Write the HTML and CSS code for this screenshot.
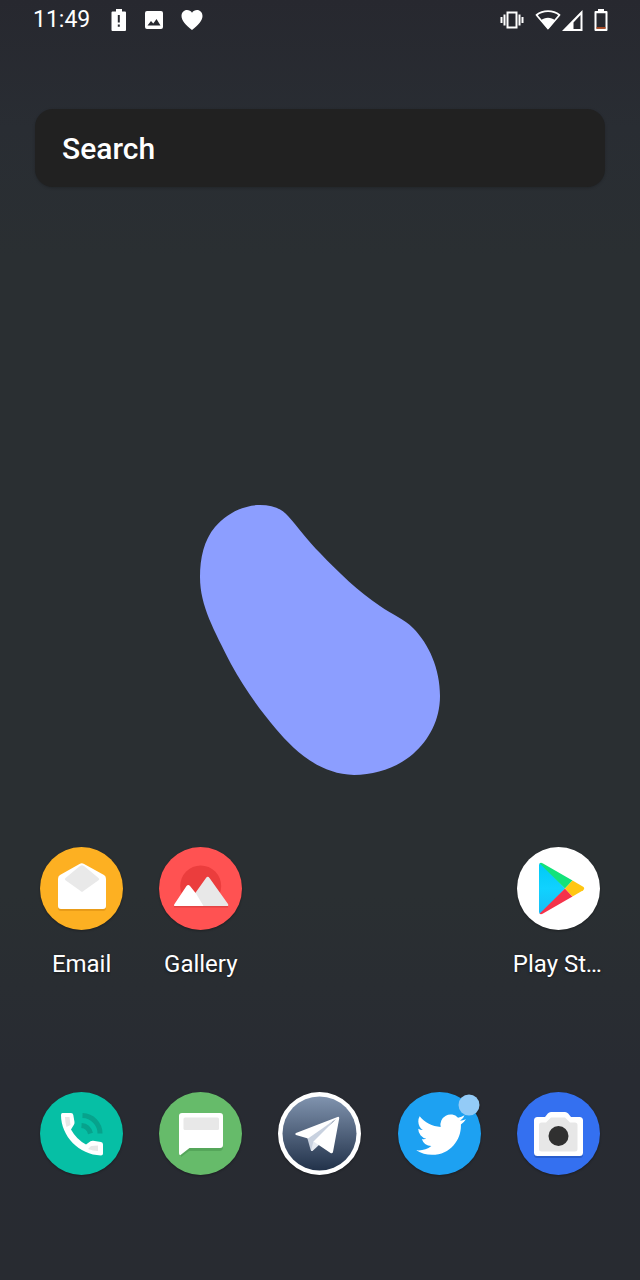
FILE: index.html
```html
<!DOCTYPE html>
<html lang="en">
<head>
<meta charset="utf-8">
<meta name="viewport" content="width=device-width, initial-scale=1">
<title>Home screen</title>
<link rel="stylesheet" href="styles.css">
</head>
<body>
<header class="status">
  <time class="clock">11:49</time>
  <div class="notices">
    <svg width="16" height="22" viewBox="0 0 16 22" aria-label="Battery alert"><path fill="#fff" fill-rule="evenodd" d="M5 0h6v2.500h3a1 1 0 0 1 1 1V21a1 1 0 0 1-1 1H1.500a1 1 0 0 1-1-1V3.500a1 1 0 0 1 1-1H5zM6.800 6v7.500h2V6zm0 9.500v2.300h2v-2.300z"/></svg>
    <svg width="20" height="20" viewBox="0 0 20 20" aria-label="Picture"><path fill="#fff" fill-rule="evenodd" d="M3 1h14a2 2 0 0 1 2 2v14a2 2 0 0 1-2 2H3a2 2 0 0 1-2-2V3a2 2 0 0 1 2-2zM3.500 15.500h13L12.500 9l-3.200 4.500L7 11z"/></svg>
    <svg width="22" height="20" viewBox="0 0 22 20" aria-label="Heart"><path fill="#fff" d="M11 20C5 15 .5 11 .5 6 .5 2.500 3 0 6 0c2 0 4 1 5 2.800C12 1 14 0 16 0c3 0 5.500 2.500 5.500 6 0 5-4.500 9-10.500 14z"/></svg>
  </div>
  <div class="signals">
    <svg class="vibrate" width="24" height="18" viewBox="0 0 24 18" aria-label="Vibrate"><g fill="none" stroke="#fff" stroke-width="2"><rect x="7.500" y="1.500" width="9" height="15"/><path d="M4.500 3.500v11M1.500 6v6M19.500 3.500v11M22.500 6v6"/></g></svg>
    <svg width="26" height="20" viewBox="0 0 26 20" aria-label="Wi-Fi"><path fill="none" stroke="#fff" stroke-width="1.800" stroke-linejoin="round" d="M1.500 5C8-.3 18-.3 24.500 5L13 18.500z"/><path fill="#fff" d="M5.800 10.500c4-3.600 10.400-3.600 14.400 0L13 19z"/></svg>
    <svg width="21" height="21" viewBox="0 0 21 21" aria-label="Mobile signal"><path fill="#fff" fill-rule="evenodd" d="M20.500 0v21H0zM18.500 5v14H11.500v-6.500z"/></svg>
    <svg class="battery" width="14" height="22" viewBox="0 0 14 22" aria-label="Battery low"><path fill="#fff" fill-rule="evenodd" d="M4 0h6v2h2.500q1 0 1 1v18q0 1-1 1h-11q-1 0-1-1V3q0-1 1-1H4zM2.500 4.200v15.500h9V4.200z"/><path fill="#c8501e" d="M2.500 18.200h9v1.500h-9z"/></svg>
  </div>
</header>

<main class="home">
  <input class="search" type="search" placeholder="Search" aria-label="Search">

  <div class="wallpaper">
    <svg width="240" height="270" viewBox="0 0 240 270" aria-hidden="true"><path fill="#8c9eff" d="M60 0C72 0 81 3 88 11C98 22 108 36 120 48C139 68 158 86 180 101C193 110 204 114 213 123C229 139 240 164 240 191C240 215 229 235 213 249C198 262 176 270 154 270C118 269 93 244 76 224C60 205 44 183 31 159C14 125 0 101 0 72C0 53 4 35 15 22C26 9 43 0 60 0Z"/></svg>
  </div>

  <nav class="row" aria-label="Apps">
    <button class="app" type="button">
      <svg class="icon" viewBox="0 0 83 83" aria-hidden="true"><circle cx="41.500" cy="41.500" r="41.500" fill="#fdb022"/><path fill="#e99c18" d="M18 33h48v28q0 3-3 3H21q-3 0-3-3z"/><path fill="#fff" d="M39.500 17q2.300-1.300 4.600 0L64 28q2 1.200 2 4v27q0 3-3 3H21q-3 0-3-3V32q0-2.800 2-4z"/><path fill="#e9e9e9" d="M25.500 31L40 19q2-1.500 4 0l14.500 12q1.500 1.200 0 2.200L42 45 25.500 33.300q-1.500-1.100 0-2.300z"/></svg>
      <span class="label">Email</span>
    </button>
    <button class="app" type="button">
      <svg class="icon" viewBox="0 0 83 83" aria-hidden="true"><circle cx="41.500" cy="41.500" r="41.500" fill="#ff5252"/><circle cx="41.700" cy="39" r="20.500" fill="#eb3d3d"/><path fill="#e34545" d="M15 58h54v2.500H15z"/><path fill="#e8e8e8" d="M47 31q1.700-2.500 3.500 0L69 57q1 2-1 2H27z"/><path fill="#fff" d="M27.500 39q1.800-2 3.500 0l6 7.500L44.500 59H16.500q-2.500 0-1-2z"/></svg>
      <span class="label">Gallery</span>
    </button>
    <button class="app app-last" type="button">
      <svg class="icon" viewBox="0 0 83 83" aria-hidden="true"><defs><linearGradient id="play" x1="0" y1="0" x2="0" y2="1"><stop offset="0" stop-color="#00c9f5"/><stop offset=".5" stop-color="#10d2ff"/><stop offset="1" stop-color="#18bdf5"/></linearGradient></defs><circle cx="41.500" cy="41.500" r="41.500" fill="#fff"/><path fill="url(#play)" d="M22 18q0-2 2-2l24 25.500L24 67q-2 0-2-2z"/><path fill="#12e27a" d="M22.500 16.300q1.500-1 3.500.2l29.500 17L48 41.500z"/><path fill="#f5334b" d="M22.500 66.700q1.500 1 3.500-.2l29.500-17L48 41.500z"/><path fill="#ffc611" d="M55.500 33.500l10.700 6.300q2 1.700 0 3.400L55.500 49.500 48 41.500z"/></svg>
      <span class="label">Play Store</span>
    </button>
  </nav>

  <nav class="row dock" aria-label="Dock">
    <button class="app" type="button" aria-label="Phone">
      <svg class="icon" viewBox="0 0 83 83" aria-hidden="true"><circle cx="41.500" cy="41.500" r="41.500" fill="#06bfa5"/><g fill="none" stroke="#07a28c" stroke-width="5"><path d="M42.500 23.500A18 18 0 0 1 60 41.500"/><path d="M41.500 33.500Q48.500 34 50.500 41.500"/></g><path fill="#fff" d="M22.500 21H31q2 0 2.300 2l1.200 7q.2 1.500-.6 2.800L31 37.500Q36.500 47.500 46 52.500l4.500-3.200q1.200-.8 2.700-.6l7.800 1.300q2 .4 2 2.400v9q0 2-2 2C39 63 21 44 21 23q0-2 1.500-2z"/><path fill="#e7e7e7" d="M25 25h4.500l1 8-4 2q-1.500-5-1.500-10zM51 54l7-.5v5.500q-5 0-10-2z"/></svg>
    </button>
    <button class="app" type="button" aria-label="Messages">
      <svg class="icon" viewBox="0 0 83 83" aria-hidden="true"><circle cx="41.500" cy="41.500" r="41.500" fill="#66bb6a"/><path fill="#55a65a" d="M22 45h42v10q0 4-3.500 4H30l-8 6z"/><path fill="#fff" d="M23 21h38q3 0 3 3v29q0 3-3 3H30.500l-8.300 6.500Q20 64 20 61V24q0-3 3-3z"/><rect x="24.500" y="25.500" width="35.500" height="12.500" rx="1.500" fill="#e8e8e8"/></svg>
    </button>
    <button class="app" type="button" aria-label="Telegram">
      <svg class="icon" viewBox="0 0 83 83" aria-hidden="true"><defs><linearGradient id="tg" x1="0" y1="0" x2="0" y2="1"><stop offset="0" stop-color="#8093ae"/><stop offset="1" stop-color="#22324a"/></linearGradient></defs><circle cx="41.500" cy="41.500" r="41.500" fill="#fff"/><circle cx="41.500" cy="41.500" r="37" fill="url(#tg)"/><path fill="#c8d1df" d="M29 45l26-16-15 22-5.500 7.500q-1 1-1.800-.5z"/><path fill="#e5eaf1" d="M33 59l2.500-10 6 3.500-7 6.500z"/><path fill="#fff" d="M18 41l41.500-16q2-.6 1.700 1.500L55 60q-.6 2-2.500 1L35.500 49.500 58 27 30 46.500 18 43q-1.700-1 0-2z"/></svg>
    </button>
    <button class="app" type="button" aria-label="Twitter, new notification">
      <svg class="icon" viewBox="0 0 83 83" aria-hidden="true"><circle cx="41.500" cy="41.500" r="41.500" fill="#1da1f2"/><path fill="#fff" transform="translate(18.300 17.800) scale(2.070)" d="M23.953 4.570a10 10 0 01-2.825.775 4.958 4.958 0 002.163-2.723c-.951.555-2.005.959-3.127 1.184a4.920 4.920 0 00-8.384 4.482C7.690 8.095 4.067 6.130 1.640 3.162a4.822 4.822 0 00-.666 2.475c0 1.710.870 3.213 2.188 4.096a4.904 4.904 0 01-2.228-.616v.060a4.923 4.923 0 003.946 4.827 4.996 4.996 0 01-2.212.085 4.936 4.936 0 004.604 3.417 9.867 9.867 0 01-6.102 2.105c-.390 0-.779-.023-1.170-.067a13.995 13.995 0 007.557 2.209c9.053 0 13.998-7.496 13.998-13.985 0-.210 0-.420-.015-.630A9.935 9.935 0 0024 4.590z"/><circle cx="71" cy="13" r="10.500" fill="#93cbf7"/></svg>
    </button>
    <button class="app" type="button" aria-label="Camera">
      <svg class="icon" viewBox="0 0 83 83" aria-hidden="true"><circle cx="41.500" cy="41.500" r="41.500" fill="#3470f0"/><path fill="#285dcd" d="M17 40h49v23q0 3-3 3H20q-3 0-3-3z"/><path fill="#fff" d="M34 20h14q2 0 3.200 1.500L54 25h8.500q3.500 0 3.500 3.500v32q0 3.500-3.500 3.500h-42q-3.500 0-3.500-3.500v-32q0-3.500 3.500-3.500H28l2.800-3.500Q32 20 34 20z"/><path fill="#e7e7e7" d="M34 25.500h14l5 5h5q2.500 0 2.500 2.500v24q0 2.500-2.500 2.500H24.500Q22 59.500 22 57V33q0-2.500 2.500-2.500h4.500z"/><circle cx="41.500" cy="44" r="10" fill="#303030"/></svg>
    </button>
  </nav>
</main>
</body>
</html>
```
FILE: styles.css
```css
* {
  box-sizing: border-box;
}

body {
  margin: 0;
  min-height: 100vh;
  display: flex;
  flex-direction: column;
  background: linear-gradient(#27282f 0%, #292d33 10%, #2a2f32 20%, #2a2f32 70%, #282b32 84%, #282b31 100%);
  color: #fff;
  font-family: Roboto, "Liberation Sans", sans-serif;
}

.status {
  display: flex;
  align-items: center;
  height: 40px;
  padding: 0 32px 0 33px;
}

.clock {
  font-size: 23px;
  line-height: 40px;
}

.notices,
.signals {
  display: flex;
  align-items: center;
}

.notices {
  gap: 17px;
  margin-left: 21px;
}

.signals {
  gap: 1px;
  margin-left: auto;
}

.vibrate {
  margin-right: 10px;
}

.battery {
  margin-left: 10px;
}

.home {
  flex: 1;
  display: flex;
  flex-direction: column;
}

.search {
  appearance: none;
  height: 78px;
  margin: 69px 35px 0;
  padding: 0 27px;
  border: 0;
  border-radius: 18px;
  background: #212121;
  box-shadow: 0 1px 3px rgba(0, 0, 0, 0.2);
  color: #fff;
  font: 500 30px Roboto, "Liberation Sans", sans-serif;
}

.search::placeholder {
  color: #fff;
  opacity: 1;
}

.wallpaper {
  flex: 1;
  display: flex;
  align-items: flex-end;
  justify-content: center;
  padding: 72px 0;
}

.row {
  display: grid;
  grid-template-columns: repeat(5, minmax(0, 1fr));
  padding: 0 22px;
}

.dock {
  padding-top: 114px;
  padding-bottom: 105px;
}

.app {
  display: flex;
  flex-direction: column;
  align-items: center;
  gap: 20px;
  padding: 0 14px;
  border: 0;
  background: none;
  color: inherit;
  font: 24px/28px Roboto, "Liberation Sans", sans-serif;
}

.app-last {
  grid-column: 5;
}

.icon {
  width: 83px;
  height: 83px;
  overflow: visible;
  filter: drop-shadow(0 1px 1px rgba(0, 0, 0, 0.3));
}

.label {
  max-width: 100%;
  overflow: hidden;
  text-overflow: ellipsis;
  white-space: nowrap;
  text-shadow: 0 1px 3px rgba(0, 0, 0, 0.5);
}
```
